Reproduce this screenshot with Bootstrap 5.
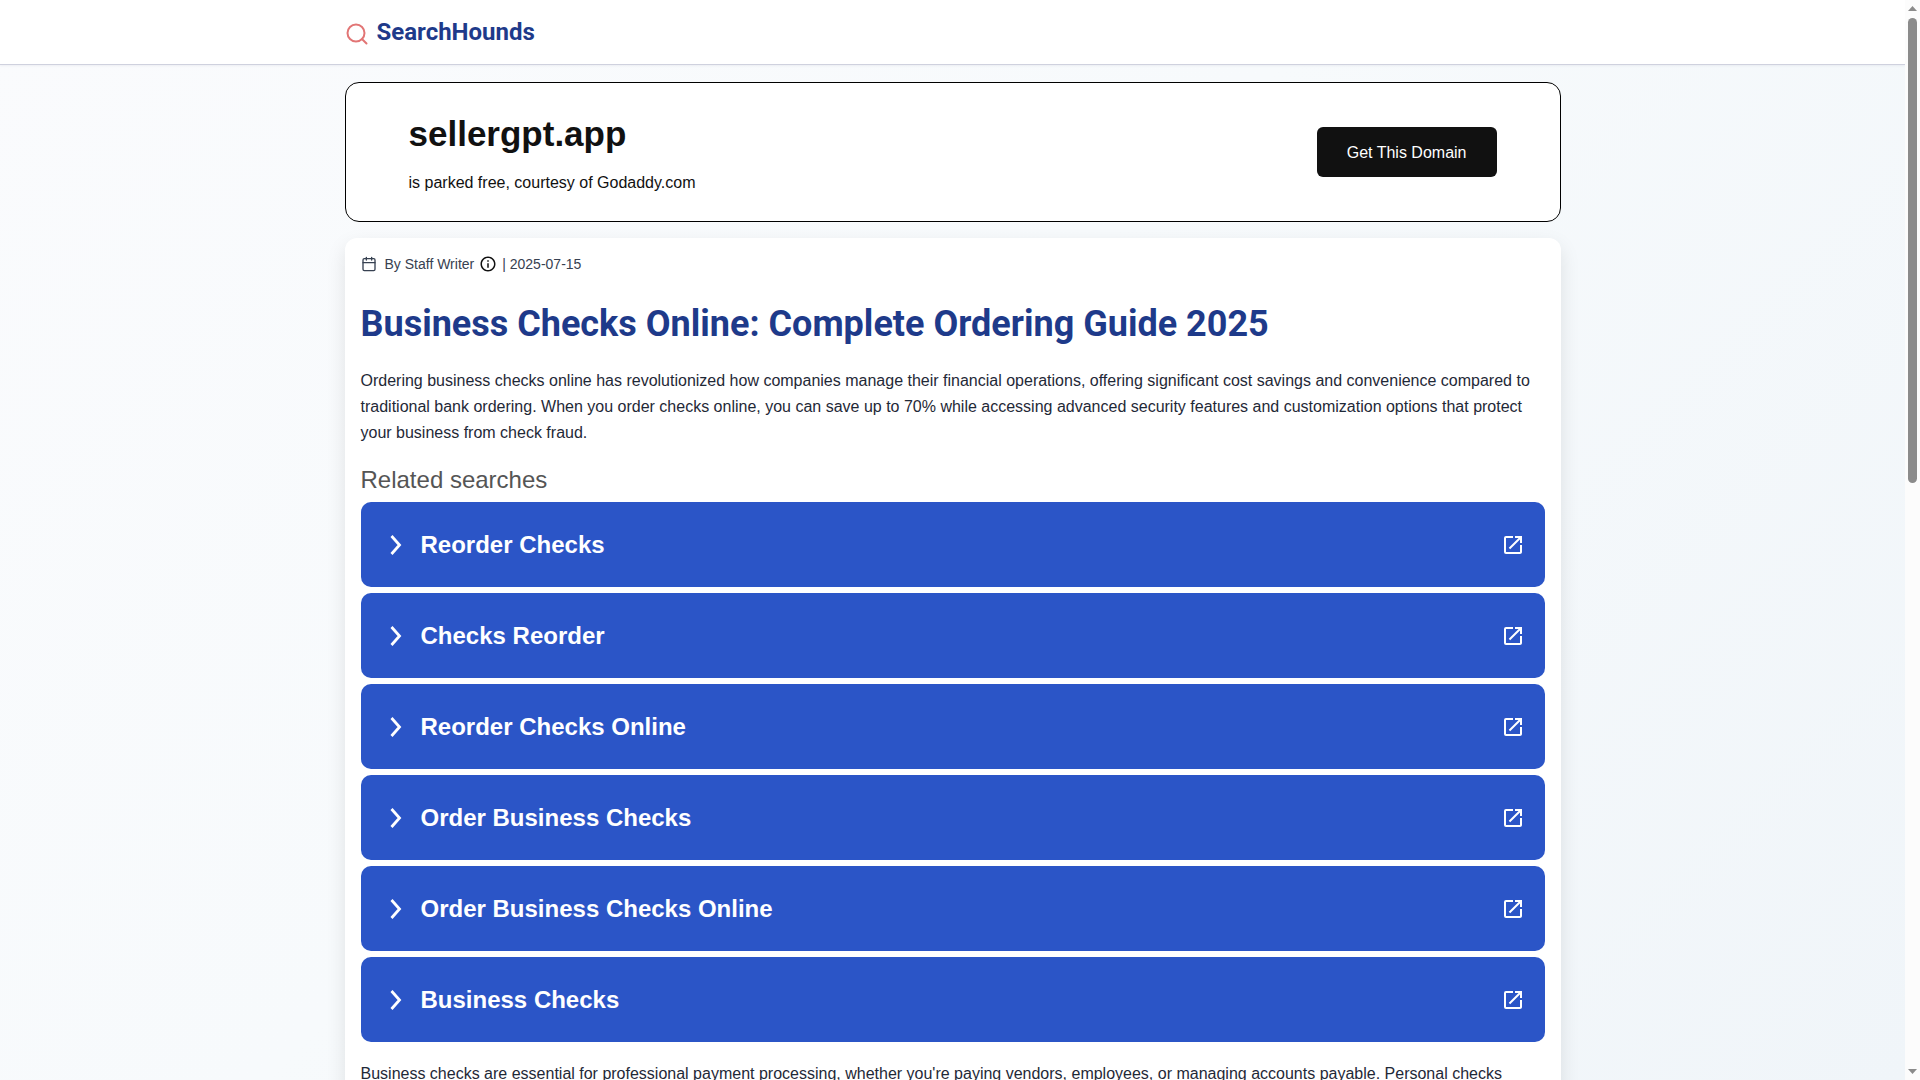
<!DOCTYPE html>
<html lang="en">
<head>
<meta charset="utf-8">
<meta name="viewport" content="width=device-width, initial-scale=1">
<title>SearchHounds - Business Checks Online</title>
<link rel="stylesheet" href="https://cdn.jsdelivr.net/npm/bootstrap@5.3.0/dist/css/bootstrap.min.css">
<style>
body { font-family: "Liberation Sans", Arial, sans-serif; font-size: 16px; line-height: 26px; color: #1f2937; }
svg { display: block; flex-shrink: 0; }
.page-view { min-width: 0; background: linear-gradient(135deg, #fafbfd 0%, #f7fafc 45%, #f0f5f9 100%); }
.wrap { max-width: 1280px; padding: 0 32px; margin: 0 auto; }
.site-head { background: #fff; border-bottom: 1px solid #cfd1de; box-shadow: 0 1px 2px rgba(30, 41, 80, .06); }
.site-head .wrap { height: 64px; }
.brand { font: 700 24px/32px Roboto, sans-serif; color: #1e3a8a; }
.content { padding-top: 17px; }
.domain-box { border: 1px solid #000; border-radius: 14px; padding: 24px 63px; min-height: 140px; color: #111; }
.domain-name { font-size: 35px; line-height: 52px; font-weight: 700; margin-bottom: 10px; }
.domain-btn { background: #111; color: #fff; border: 0; border-radius: 6px; padding: 13px 30px 11px; font-size: 16px; line-height: 26px; }
.domain-btn:hover { background: #333; color: #fff; }
.article-box { border-radius: 12px; padding: 16px; box-shadow: 0 8px 20px rgba(0, 0, 0, .1); }
.byline { font-size: 14px; line-height: 20px; color: #374151; }
.byline-info { margin: 0 5px; }
.headline { font: 700 36px/44px Roboto, sans-serif; color: #1e3a8a; margin: 28px 0 22px; }
.lead-text { margin-bottom: 18px; }
.related-title { font-size: 24px; line-height: 32px; color: #555; margin-bottom: 6px; }
.related-list { gap: 6px; margin-bottom: 19px; }
.related-link { height: 85px; border-radius: 10px; padding: 0 20px; background: #2b55c7; color: #fff; font-size: 24px; font-weight: 700; }
.related-link:hover { background: #244ab0; color: #fff; }
.scroll-rail { width: 15px; padding: 6px 3px; background: #fcfcfc; }
.scroll-thumb { width: 9px; height: 465px; margin-top: 7px; border-radius: 5px; background: #8b8b8b; }
</style>
<script src="https://cdn.jsdelivr.net/npm/bootstrap@5.3.0/dist/js/bootstrap.bundle.min.js"></script>
</head>
<body>
<svg class="d-none" aria-hidden="true">
  <symbol id="chev" viewBox="0 0 24 24"><path d="M10.500 3l8 9-8 9" fill="none" stroke="currentColor" stroke-width="2.800"/></symbol>
  <symbol id="open" viewBox="0 0 24 24"><path fill="currentColor" d="M19 19H5V5h7V3H5a2 2 0 0 0-2 2v14a2 2 0 0 0 2 2h14c1.100 0 2-.9 2-2v-7h-2v7zM14 3v2h3.590l-9.830 9.830 1.410 1.410L19 6.410V10h2V3h-7z"/></symbol>
</svg>
<div class="d-flex vh-100 overflow-hidden">
  <div class="page-view flex-grow-1 overflow-hidden">
    <header class="site-head">
      <div class="wrap d-flex align-items-center">
        <a href="#" class="brand d-flex align-items-center gap-2 text-decoration-none">
          <svg width="24" height="24" viewBox="0 0 24 24" fill="none" stroke="#e27575" stroke-width="2" stroke-linecap="round" stroke-linejoin="round" class="mt-1"><circle cx="11" cy="11" r="8.500"/><path d="M21.500 21.500l-4.300-4.300"/></svg>
          <span>SearchHounds</span>
        </a>
      </div>
    </header>
    <main class="wrap content">
      <section class="domain-box bg-white d-flex align-items-center justify-content-between mb-3">
        <div>
          <div class="domain-name">sellergpt.app</div>
          <div>is parked free, courtesy of Godaddy.com</div>
        </div>
        <button type="button" class="btn domain-btn">Get This Domain</button>
      </section>
      <article class="article-box bg-white">
        <div class="byline d-flex align-items-center">
          <svg class="me-2" width="16" height="16" viewBox="0 0 24 24" fill="none" stroke="currentColor" stroke-width="2" stroke-linecap="round" stroke-linejoin="round"><rect x="3" y="4" width="18" height="18" rx="2"/><path d="M16 2v4M8 2v4M3 10h18"/></svg>
          <span>By Staff Writer</span>
          <svg class="byline-info" width="18" height="18" viewBox="0 0 24 24" fill="#111"><path d="M11 7h2v2h-2zm0 4h2v6h-2zm1-9C6.480 2 2 6.480 2 12s4.480 10 10 10 10-4.480 10-10S17.520 2 12 2zm0 18c-4.410 0-8-3.590-8-8s3.590-8 8-8 8 3.590 8 8-3.590 8-8 8z"/></svg>
          <span>| 2025-07-15</span>
        </div>
        <h1 class="headline">Business Checks Online: Complete Ordering Guide 2025</h1>
        <p class="lead-text">Ordering business checks online has revolutionized how companies manage their financial operations, offering significant cost savings and convenience compared to traditional bank ordering. When you order checks online, you can save up to 70% while accessing advanced security features and customization options that protect your business from check fraud.</p>
        <div class="related-title">Related searches</div>
        <nav class="d-flex flex-column related-list" aria-label="Related searches">
          <a href="#" class="related-link d-flex align-items-center text-decoration-none"><svg width="24" height="24"><use href="#chev"/></svg><span class="flex-grow-1 ms-3">Reorder Checks</span><svg width="24" height="24"><use href="#open"/></svg></a>
          <a href="#" class="related-link d-flex align-items-center text-decoration-none"><svg width="24" height="24"><use href="#chev"/></svg><span class="flex-grow-1 ms-3">Checks Reorder</span><svg width="24" height="24"><use href="#open"/></svg></a>
          <a href="#" class="related-link d-flex align-items-center text-decoration-none"><svg width="24" height="24"><use href="#chev"/></svg><span class="flex-grow-1 ms-3">Reorder Checks Online</span><svg width="24" height="24"><use href="#open"/></svg></a>
          <a href="#" class="related-link d-flex align-items-center text-decoration-none"><svg width="24" height="24"><use href="#chev"/></svg><span class="flex-grow-1 ms-3">Order Business Checks</span><svg width="24" height="24"><use href="#open"/></svg></a>
          <a href="#" class="related-link d-flex align-items-center text-decoration-none"><svg width="24" height="24"><use href="#chev"/></svg><span class="flex-grow-1 ms-3">Order Business Checks Online</span><svg width="24" height="24"><use href="#open"/></svg></a>
          <a href="#" class="related-link d-flex align-items-center text-decoration-none"><svg width="24" height="24"><use href="#chev"/></svg><span class="flex-grow-1 ms-3">Business Checks</span><svg width="24" height="24"><use href="#open"/></svg></a>
        </nav>
        <p class="mb-0">Business checks are essential for professional payment processing, whether you're paying vendors, employees, or managing accounts payable. Personal checks</p>
      </article>
    </main>
  </div>
  <div class="scroll-rail d-flex flex-column align-items-center flex-shrink-0" aria-hidden="true">
    <svg width="9" height="5" viewBox="0 0 9 5"><path d="M0 5L4.500 0 9 5z" fill="#8b8b8b"/></svg>
    <div class="scroll-thumb"></div>
    <svg class="mt-auto" width="9" height="5" viewBox="0 0 9 5"><path d="M0 0h9L4.500 5z" fill="#8b8b8b"/></svg>
  </div>
</div>
</body>
</html>
